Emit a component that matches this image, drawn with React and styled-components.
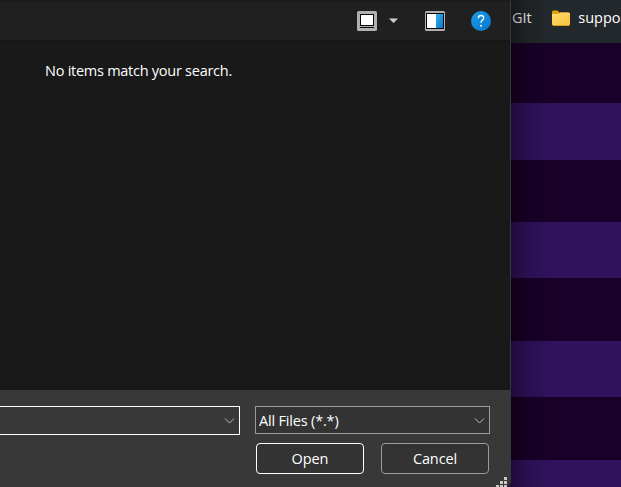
import React from "react";
import styled, { createGlobalStyle } from "styled-components";

const Global = createGlobalStyle`
  *, *::before, *::after { box-sizing: border-box; }
  body { margin: 0; overflow: hidden; background: #170026; }
`;

const Screen = styled.div`
  display: flex;
  width: 621px;
  height: 487px;
  overflow: hidden;
  color: #fff;
  font: 15px/20px "Open Sans", "Noto Sans", sans-serif;
`;

const Dialog = styled.section`
  display: flex;
  flex-direction: column;
  flex: 0 0 511px;
  background: #191919;
  border-right: 1px solid #39373e;
  border-bottom-right-radius: 6px;
`;

const Toolbar = styled.header`
  display: flex;
  align-items: center;
  height: 41px;
  padding-left: 357px;
  background: #202020;
  border-top: 2px solid #1b1b1b;
  border-bottom: 1px solid #151515;
`;

const ToolIcon = styled.svg`
  display: block;
  flex: none;
  margin-left: ${(p) => p.$gap || 0}px;
`;

const Results = styled.main`
  flex: 1;
  padding: 19px 0 0 45px;
`;

const Label = styled.span`
  display: inline-block;
  white-space: nowrap;
  font-size: ${(p) => p.$size || 14.5}px;
  letter-spacing: ${(p) => p.$spacing || 0}px;
`;

const Footer = styled.footer`
  display: flex;
  flex-direction: column;
  position: relative;
  height: 97px;
  padding-top: 16px;
  background: #383838;
  border-bottom-right-radius: 5px;
`;

const Fields = styled.div`
  display: flex;
  align-items: flex-start;
  gap: 15px;
`;

const Combo = styled.div`
  display: flex;
  align-items: center;
  justify-content: space-between;
  width: ${(p) => p.$width}px;
  height: ${(p) => (p.$active ? 29 : 28)}px;
  padding: 1px 4px 0 3px;
  background: ${(p) => (p.$active ? "#383838" : "#333")};
  border: 1px solid ${(p) => (p.$active ? "#fff" : "#9b9b9b")};
  border-left-width: ${(p) => (p.$active ? 0 : 1)}px;
`;

const Actions = styled.div`
  display: flex;
  gap: 17px;
  padding-left: 256px;
  margin-top: 8px;
`;

const Button = styled.button`
  display: flex;
  align-items: center;
  justify-content: center;
  width: 108px;
  height: 31px;
  padding: 0;
  color: #fff;
  font: inherit;
  background: #333;
  border: 1px solid ${(p) => (p.$primary ? "#fff" : "#9b9b9b")};
  border-radius: 4px;
`;

const Grip = styled.svg`
  position: absolute;
  right: 3px;
  bottom: 0;
`;

const Browser = styled.aside`
  position: relative;
  flex: 1;
  min-width: 0;
  margin-left: -6px;
  z-index: -1;
  &::after {
    content: "";
    position: absolute;
    inset: 0;
    background: linear-gradient(90deg, rgba(0,0,0,.38) 6px, rgba(0,0,0,.15) 22px, transparent 48px);
  }
`;

const Bookmarks = styled.div`
  display: flex;
  align-items: center;
  height: 43px;
  padding: 0 0 7px 7px;
  background: #23282c;
`;

const Folder = styled.svg`
  flex: none;
  margin: 0 7px 0 19.500px;
`;

const Stripe = styled.div`
  height: ${(p) => p.$height}px;
  background: ${(p) => (p.$light ? "#31125d" : "#190028")};
`;

const stripes = [60, 57, 62, 56, 63, 56, 63, 27];

const Chevron = () => (
  <svg width="11" height="8" viewBox="0 0 11 8" fill="none">
    <path d="M1 1.5 5.5 6 10 1.5" stroke="#bcbcbc" />
  </svg>
);

export default function App() {
  return (
    <>
      <Global />
      <Screen>
        <Dialog>
          <Toolbar>
            <ToolIcon width="20" height="20" viewBox="0 0 20 20">
              <rect width="20" height="20" rx="1.5" fill="#b0b0b0" />
              <path d="M3 3h14v12H3zM3 16h14v1H3z" fill="#080808" />
              <path d="M4 4h12v10H4z" fill="#fff" />
            </ToolIcon>
            <ToolIcon $gap={12} width="9" height="6" viewBox="0 0 9 6">
              <path d="M0 .5h9L4.5 5z" fill="#d0d0d0" />
            </ToolIcon>
            <ToolIcon $gap={27} width="20" height="20" viewBox="0 0 20 20">
              <defs>
                <linearGradient id="pane" x2="1" y2="1">
                  <stop stopColor="#35b2ef" />
                  <stop offset="1" stopColor="#0876cf" />
                </linearGradient>
              </defs>
              <rect width="20" height="20" rx="1.5" fill="#b0b0b0" />
              <path d="M1 2h18v16H1z" fill="#080808" />
              <path d="M2 3h9v14H2z" fill="#fff" />
              <path d="M11 3h7v14h-7z" fill="url(#pane)" />
            </ToolIcon>
            <ToolIcon $gap={26} width="20" height="20" viewBox="0 0 20 20">
              <defs>
                <linearGradient id="help" x2="1" y2="1">
                  <stop stopColor="#199be6" />
                  <stop offset="1" stopColor="#0878d0" />
                </linearGradient>
              </defs>
              <circle cx="10" cy="10" r="10" fill="url(#help)" />
              <path d="M7.4 7.3V6.8C7.4 5.3 8.5 4.5 10 4.5s2.7.9 2.7 2.4c0 2.2-2.7 2.2-2.7 4.9" fill="none" stroke="#fff" strokeWidth="1.4" />
              <circle cx="10" cy="14.7" r="1" fill="#fff" />
            </ToolIcon>
          </Toolbar>
          <Results>
            <Label $spacing={-0.26}>No items match your search.</Label>
          </Results>
          <Footer>
            <Fields>
              <Combo $width={240} $active><span /><Chevron /></Combo>
              <Combo $width={235}><Label $spacing={-0.18}>All Files (*.*)</Label><Chevron /></Combo>
            </Fields>
            <Actions>
              <Button $primary><Label $spacing={-0.1}>Open</Label></Button>
              <Button><Label $spacing={-0.1}>Cancel</Label></Button>
            </Actions>
            <Grip width="11" height="10" viewBox="0 0 11 10" fill="#c8c8c4">
              <path d="M8 0h3v3H8zM4 4h3v3H4zM8 4h3v3H8zM0 8h3v2H0zM4 8h3v2H4zM8 8h3v2H8z" />
            </Grip>
          </Footer>
        </Dialog>
        <Browser>
          <Bookmarks>
            <Label $size={14.5}>GIt</Label>
            <Folder width="20" height="17" viewBox="0 0 20 17">
              <defs>
                <linearGradient id="folder" x2="1" y2="1">
                  <stop stopColor="#ffdc70" />
                  <stop offset="1" stopColor="#f9c23c" />
                </linearGradient>
              </defs>
              <path d="M1 2Q1 .5 2.500 .5h4l2 2h9q1.500 0 1.500 1.500v5H1z" fill="#e5a00d" />
              <path d="M1 4h6.500l2-1.500h8q1.500 0 1.500 1.500V14q0 1.500-1.500 1.500h-15Q1 15.500 1 14z" fill="url(#folder)" />
              <path d="M2 15.500h16" stroke="#dd9d13" />
            </Folder>
            <Label $size={14.5}>suppo</Label>
          </Bookmarks>
          {stripes.map((height, index) => (
            <Stripe key={index} $height={height} $light={index % 2 === 1} />
          ))}
        </Browser>
      </Screen>
    </>
  );
}
